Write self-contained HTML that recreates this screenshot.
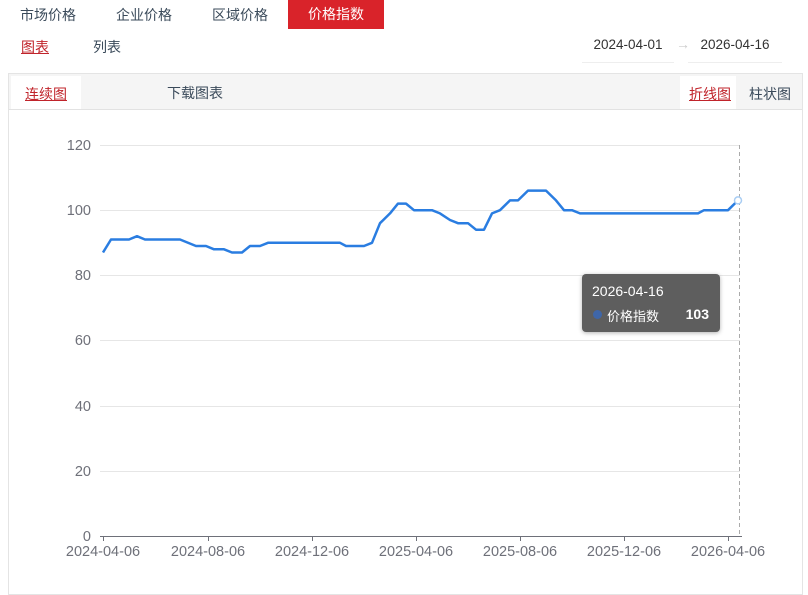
<!DOCTYPE html>
<html><head><meta charset="utf-8"><style>
body{margin:0;width:808px;height:585px;background:#fff;font-family:"Liberation Sans","Noto Sans CJK SC",sans-serif;position:relative;overflow:hidden;color:#333}
.a{position:absolute;font-size:14px;white-space:nowrap}
</style></head><body>
<div class="a" style="left:20px;top:5px;color:#3a4a5a">市场价格</div>
<div class="a" style="left:116px;top:5px;color:#3a4a5a">企业价格</div>
<div class="a" style="left:212px;top:5px;color:#3a4a5a">区域价格</div>
<div class="a" style="left:288px;top:0;width:96px;height:29px;background:#d9232a;color:#fff;text-align:center;line-height:29px">价格指数</div>
<div class="a" style="left:21px;top:37px;color:#c0242b;text-decoration:underline">图表</div>
<div class="a" style="left:93px;top:37px;color:#3a4a5a">列表</div>
<div class="a" style="left:582px;top:37px;width:92px;text-align:center;font-size:13.5px;height:25px;border-bottom:1px solid #eee">2024-04-01</div>
<div class="a" style="left:676px;top:36px;color:#ccc;font-size:14px">→</div>
<div class="a" style="left:688px;top:37px;width:94px;text-align:center;font-size:13.5px;height:25px;border-bottom:1px solid #eee">2026-04-16</div>
<div class="a" style="left:8px;top:73px;width:793px;height:520px;border:1px solid #e4e4e4"></div>
<div class="a" style="left:9px;top:74px;width:793px;height:35px;background:#f5f5f5;border-bottom:1px solid #e2e2e2"></div>
<div class="a" style="left:11px;top:76px;width:70px;height:33px;background:#fff"></div>
<div class="a" style="left:25px;top:84px;color:#c0242b;text-decoration:underline">连续图</div>
<div class="a" style="left:167px;top:83px;color:#3a4a5a">下载图表</div>
<div class="a" style="left:680px;top:76px;width:56px;height:33px;background:#fff"></div>
<div class="a" style="left:689px;top:84px;color:#c0242b;text-decoration:underline">折线图</div>
<div class="a" style="left:749px;top:84px;color:#3a4a5a">柱状图</div>
<svg class="a" style="left:0;top:0" width="808" height="585">
<g stroke="#e6e6e6" stroke-width="1">
<line x1="100" x2="740" y1="145.5" y2="145.5"/><line x1="100" x2="740" y1="210.5" y2="210.5"/><line x1="100" x2="740" y1="275.5" y2="275.5"/><line x1="100" x2="740" y1="340.5" y2="340.5"/><line x1="100" x2="740" y1="406.5" y2="406.5"/><line x1="100" x2="740" y1="471.5" y2="471.5"/>
</g>
<line x1="100" x2="742" y1="536.5" y2="536.5" stroke="#6e7079"/>
<g stroke="#6e7079"><line x1="103.5" x2="103.5" y1="536" y2="541"/><line x1="208.5" x2="208.5" y1="536" y2="541"/><line x1="312.5" x2="312.5" y1="536" y2="541"/><line x1="416.5" x2="416.5" y1="536" y2="541"/><line x1="520.5" x2="520.5" y1="536" y2="541"/><line x1="624.5" x2="624.5" y1="536" y2="541"/><line x1="728.5" x2="728.5" y1="536" y2="541"/></g>
<line x1="739.5" x2="739.5" y1="145" y2="536" stroke="#aaa" stroke-dasharray="4,3"/>
<g font-size="14.5" fill="#6e7079" text-anchor="end" font-family="Liberation Sans,sans-serif">
<text x="91" y="150">120</text><text x="91" y="215">100</text><text x="91" y="280">80</text><text x="91" y="345">60</text><text x="91" y="411">40</text><text x="91" y="476">20</text><text x="91" y="541">0</text>
</g>
<g font-size="14.5" fill="#6e7079" text-anchor="middle" font-family="Liberation Sans,sans-serif">
<text x="103" y="556">2024-04-06</text><text x="208" y="556">2024-08-06</text><text x="312" y="556">2024-12-06</text><text x="416" y="556">2025-04-06</text><text x="520" y="556">2025-08-06</text><text x="624" y="556">2025-12-06</text><text x="728" y="556">2026-04-06</text>
</g>
<polyline fill="none" stroke="#2a7de1" stroke-width="2.5" stroke-linejoin="round" points="103,252.5 111,239.5 129,239.5 137,236.2 145,239.5 180,239.5 196,246 206,246 214,249.3 224,249.3 232,252.5 242,252.5 250,246 260,246 268,242.8 340,242.8 346,246 364,246 372,242.8 380,223.2 390,213.4 398,203.6 406,203.6 414,210.2 432,210.2 440,213.4 450,220 458,223.2 468,223.2 476,229.7 484,229.7 492,213.4 500,210.2 510,200.4 518,200.4 528,190.6 546,190.6 556,200.4 564,210.2 572,210.2 580,213.4 698,213.4 704,210.2 728,210.2 738,200.4"/>
<circle cx="738" cy="200.4" r="3.5" fill="#fff" stroke="#a9cdf3" stroke-width="1.5"/>
</svg>
<div class="a" style="left:582px;top:274px;width:138px;height:58px;background:#5e5e5e;border-radius:4px;box-shadow:0 1px 4px rgba(0,0,0,.3);color:#fff">
<div style="position:absolute;left:10px;top:9px;font-size:14px">2026-04-16</div>
<div style="position:absolute;left:11px;top:36px;width:9px;height:9px;border-radius:50%;background:#3f66a8"></div>
<div style="position:absolute;left:25px;top:32px;font-size:13px">价格指数</div>
<div style="position:absolute;right:11px;top:32px;font-size:14px;font-weight:bold">103</div>
</div>
</body></html>
